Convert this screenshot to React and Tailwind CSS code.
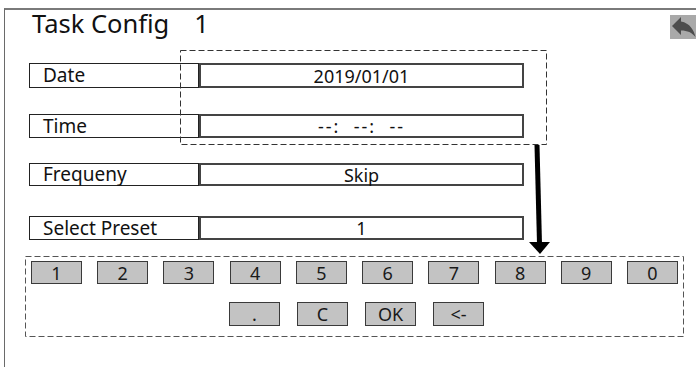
import React from "react"

const font = { fontFamily: '"Noto Sans", "Open Sans", sans-serif' }

const fields = [
  { label: "Date", value: "2019/01/01", h: "h-[25px]", mt: "mt-[28px]" },
  { label: "Time", value: "--:  --:  --", h: "h-[24px]", mt: "mt-[26px]", wide: true },
  { label: "Frequeny", value: "Skip", h: "h-[23px]", mt: "mt-[25px]" },
  { label: "Select Preset", value: "1", h: "h-[24px]", mt: "mt-[30px]" },
]

const digits = ["1", "2", "3", "4", "5", "6", "7", "8", "9", "0"]
const actions = [".", "C", "OK", "<-"]

function Key({ children, tall }) {
  return (
    <div
      className={`w-[51px] ${tall ? "h-[24px]" : "h-[23px]"} bg-[#c3c3c3] border border-[#3a3a3a] flex items-center justify-center text-[18px] leading-none text-[#1a1a1a] whitespace-pre`}
    >
      {children}
    </div>
  )
}

// dashed outline with long dashes, like the reference
function DashedOutline({ color }) {
  return (
    <svg className="absolute inset-0 w-full h-full pointer-events-none" preserveAspectRatio="none">
      <rect x="0.5" y="0.5" width="calc(100% - 1px)" height="calc(100% - 1px)" fill="none" stroke={color} strokeWidth="1" strokeDasharray="6 3" />
    </svg>
  )
}

export default function App() {
  return (
    <div className="relative w-[696px] h-[367px] bg-white overflow-hidden pt-[8px] pl-[4px] text-[#111]" style={font}>
      <div className="h-full border-t-2 border-l border-t-[#7a7a7a] border-l-[#6a6a6a]">
        {/* title */}
        <div className="pl-[27px] mt-[1px] text-[25.5px] leading-[24px] whitespace-pre">
          Task Config<span className="ml-[25px]">1</span>
        </div>

        {/* fields */}
        {fields.map((f) => (
          <div key={f.label} className={`flex ml-[24px] ${f.mt} ${f.h}`}>
            <div className="w-[170px] h-full border border-[#222] flex items-center pl-[13px] text-[19px] leading-none">
              {f.label}
            </div>
            <div
              className={`w-[325px] h-full border-2 border-[#444] flex items-center justify-center text-[18px] leading-none whitespace-pre ${f.wide ? "tracking-[2px]" : ""}`}
            >
              {f.value}
            </div>
          </div>
        ))}

        {/* keypad */}
        <div className="relative ml-[20px] mt-[16px] w-[659px] h-[81px] pt-[5px]">
          <DashedOutline color="#555" />
          <div className="flex justify-between px-[6px]">
            {digits.map((d) => (
              <Key key={d}>{d}</Key>
            ))}
          </div>
          <div className="flex justify-center gap-[17px] mt-[18px] pl-[4px]">
            {actions.map((a) => (
              <Key key={a} tall>
                {a}
              </Key>
            ))}
          </div>
        </div>
      </div>

      {/* back button */}
      <div className="absolute left-[670px] top-[15px] w-[30px] h-[24px] bg-[#a9a9a9] flex items-center">
        <svg width="30" height="24" viewBox="0 0 30 24">
          <path d="M11 6.5V2L2 11l9 9v-4.6c6.5 0 11 2.1 14.5 6.6C24 15.5 20 8 11 6.5z" fill="#4d4d4d" />
        </svg>
      </div>

      {/* selection marker */}
      <div className="absolute left-[180px] top-[50px] w-[367px] h-[95px]">
        <DashedOutline color="#333" />
      </div>
      <svg className="absolute left-0 top-0" width="696" height="367">
        <line x1="537" y1="145" x2="539.5" y2="244" stroke="#000" strokeWidth="5" />
        <polygon points="529,242 550,242 540,254" fill="#000" />
      </svg>
    </div>
  )
}
